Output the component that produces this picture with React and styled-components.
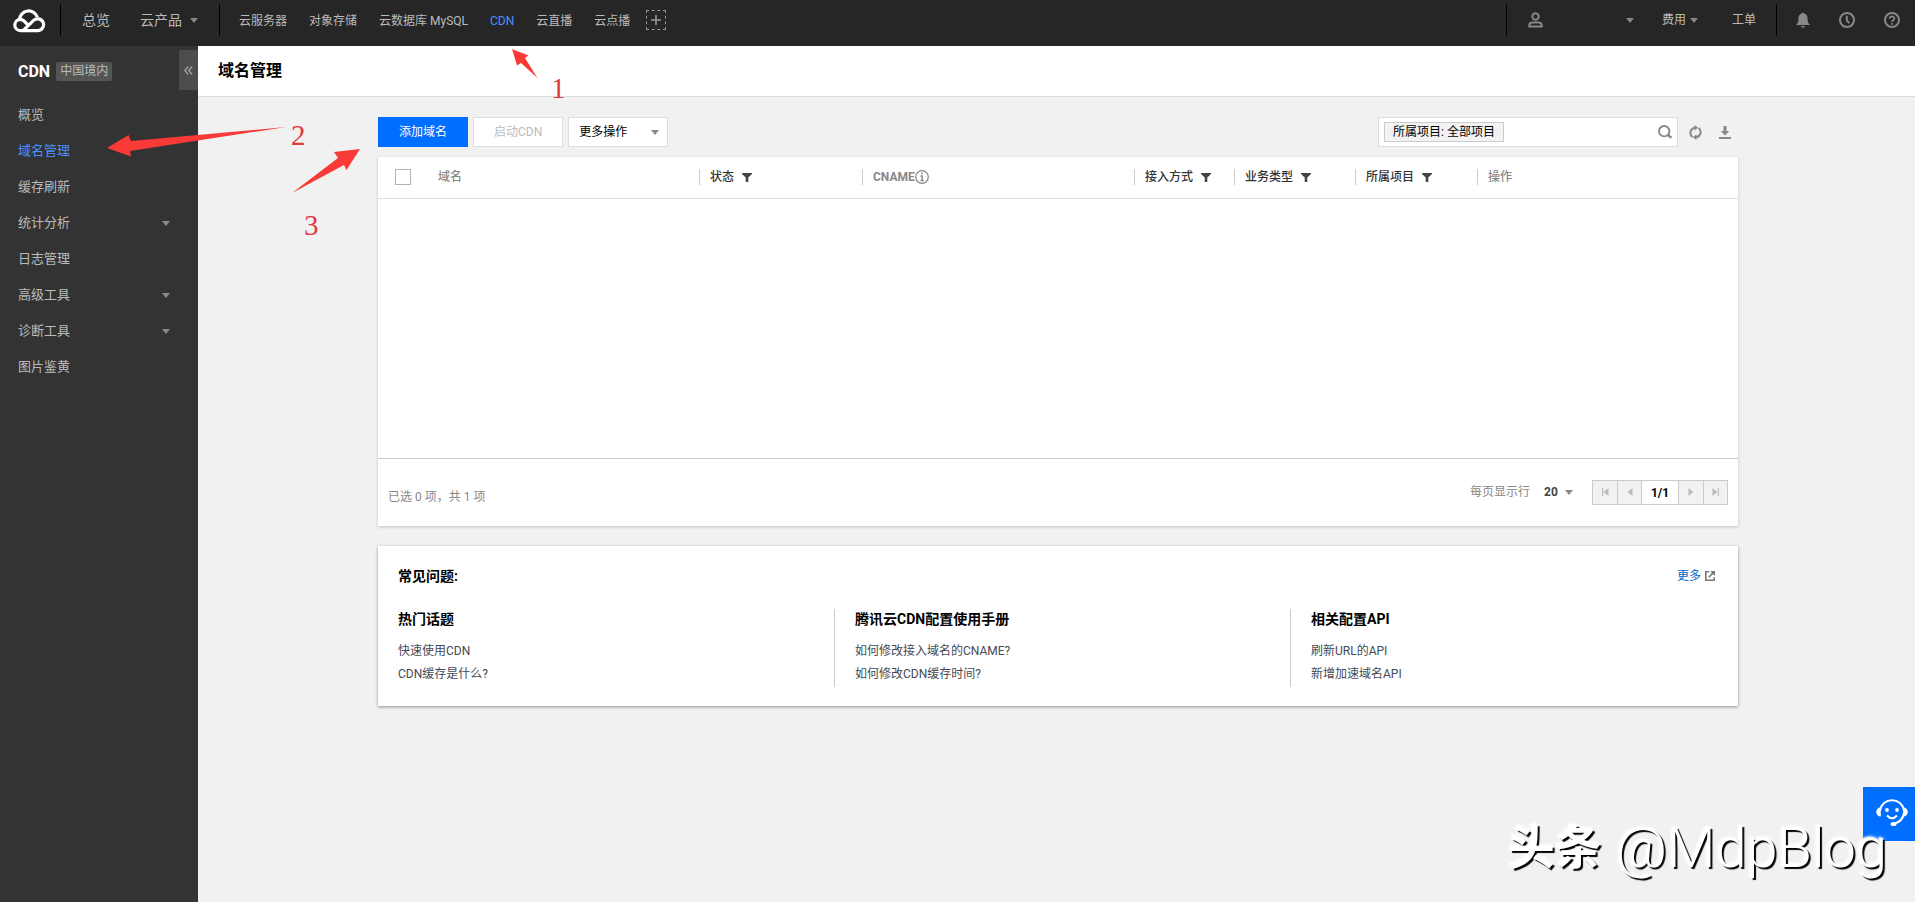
import React, { useState } from 'react';
import styled, { createGlobalStyle } from 'styled-components';

const GlobalStyle = createGlobalStyle`
  * {
    box-sizing: border-box;
  }

  body {
    margin: 0;
    background-color: #f1f1f1;
    color: #000000;
    font-family: Roboto, "Noto Sans CJK SC", sans-serif;
    font-size: 12px;
    line-height: 20px;
  }

  a {
    color: inherit;
    text-decoration: none;
  }

  button, input, select {
    font: inherit;
    color: inherit;
    border-radius: 0;
  }

  svg {
    display: block;
    flex: none;
  }
`;

const Page = styled.div`
  position: relative;
  display: flex;
  flex-direction: column;
  min-height: 100vh;
`;

const Header = styled.header`
  display: flex;
  align-items: center;
  justify-content: space-between;
  height: 46px;
  padding: 0 15px 6px 12px;
  background-color: #262626;
  color: #bbbbbb;
`;

const HeaderGroup = styled.nav`
  display: flex;
  align-items: center;
`;

const Divider = styled.span`
  width: 1px;
  height: 32px;
  background-color: #000000;
`;

const LogoLink = styled.a`
  margin-right: 14px;
`;

const MainLinks = styled.div`
  display: flex;
  align-items: center;
  gap: 30px;
  padding: 0 21px;
  font-size: 14px;
`;

const ProductLinks = styled.div`
  display: flex;
  align-items: center;
  gap: 22px;
  padding: 2px 0 0 19px;
`;

const NavLink = styled.a`
  display: flex;
  align-items: center;
  gap: ${(props) => props.$gap || 7}px;
  color: ${(props) => (props.$active ? '#4a90ff' : 'inherit')};
`;

const IconButton = styled.button`
  display: flex;
  align-items: center;
  justify-content: center;
  padding: 0;
  border: none;
  background: none;
  color: ${(props) => props.$color || '#888888'};
  cursor: pointer;
`;

const AddButton = styled(IconButton)`
  width: 20px;
  height: 20px;
  margin-left: 16px;
  border: 1px dashed #999999;
`;

const UserButton = styled(IconButton)`
  justify-content: space-between;
  width: 106px;
  margin: 0 28px 0 21px;
`;

const HeaderTexts = styled.div`
  display: flex;
  gap: 34px;
  padding-right: 20px;
`;

const HeaderIcons = styled.div`
  display: flex;
  align-items: center;
  gap: 29px;
  padding-left: 19px;
`;

const Body = styled.div`
  display: flex;
  flex: 1;
`;

const Sidebar = styled.aside`
  width: 198px;
  flex: none;
  background-color: #333333;
  color: #bbbbbb;
`;

const SidebarTop = styled.div`
  display: flex;
  justify-content: space-between;
  padding: 4px 0 4px 18px;
`;

const SidebarTitle = styled.div`
  display: flex;
  align-items: center;
  gap: 6px;
  height: 43px;
  color: #ffffff;
  font-size: 16px;
  font-weight: 700;
`;

const Region = styled.span`
  padding: 0 4px;
  border-radius: 2px;
  background-color: #555555;
  color: #bbbbbb;
  font-size: 12px;
  font-weight: 400;
  line-height: 19px;
`;

const Collapse = styled(IconButton)`
  width: 19px;
  height: 40px;
  background-color: #4d4d4d;
  color: #aaaaaa;
`;

const Menu = styled.ul`
  margin: 0;
  padding: 0;
  list-style: none;
`;

const MenuLink = styled.a`
  display: flex;
  align-items: center;
  justify-content: space-between;
  height: 36px;
  padding: 0 28px 0 18px;
  color: ${(props) => (props.$active ? '#4a90ff' : '#bbbbbb')};
  font-size: 13px;
`;

const Main = styled.main`
  flex: 1;
  min-width: 0;
`;

const TitleBar = styled.div`
  display: flex;
  align-items: center;
  height: 51px;
  padding: 0 20px;
  border-bottom: 1px solid #dddddd;
  background-color: #ffffff;
`;

const PageTitle = styled.h1`
  margin: 0;
  font-size: 16px;
  font-weight: 700;
`;

const Content = styled.div`
  padding: 20px 20px 20px 23px;
`;

const Inner = styled.div`
  max-width: 1360px;
  margin: 0 auto;
`;

const Toolbar = styled.div`
  display: flex;
  justify-content: space-between;
  margin-bottom: 10px;
`;

const ToolbarGroup = styled.div`
  display: flex;
  align-items: center;
  gap: ${(props) => props.$gap}px;
`;

const Button = styled.button`
  height: 30px;
  padding: 0 20px;
  border: 1px solid ${(props) => (props.$primary ? '#006eff' : '#dddddd')};
  background-color: ${(props) => (props.$primary ? '#006eff' : '#ffffff')};
  color: ${(props) => (props.$primary ? '#ffffff' : '#bbbbbb')};
  cursor: pointer;
`;

const SelectWrap = styled.span`
  display: inline-grid;
  align-items: center;

  select, svg {
    grid-area: 1 / 1;
  }

  svg {
    justify-self: end;
    margin-right: ${(props) => props.$caretRight || 0}px;
    pointer-events: none;
  }
`;

const ActionSelect = styled.select`
  width: 100px;
  height: 30px;
  padding: 0 10px;
  border: 1px solid #dddddd;
  appearance: none;
  background-color: #ffffff;
`;

const SearchBox = styled.div`
  display: flex;
  align-items: center;
  width: 300px;
  height: 30px;
  padding: 0 5px;
  border: 1px solid #dddddd;
  background-color: #ffffff;
`;

const Tag = styled.span`
  padding: 0 8px;
  border: 1px solid #cccccc;
  background-color: #f2f2f2;
  line-height: 18px;
  white-space: nowrap;
`;

const SearchInput = styled.input`
  flex: 1;
  min-width: 0;
  padding: 0 6px;
  border: none;
  outline: none;
  background: none;
`;

const ToolIcons = styled.div`
  display: flex;
  align-items: center;
  gap: 17px;
  padding: 0 7px 0 11px;
`;

const Card = styled.section`
  background-color: #ffffff;
  box-shadow: 0 1px 3px rgba(0, 0, 0, ${(props) => (props.$deep ? '0.4' : '0.2')});
`;

const Table = styled.table`
  width: 100%;
  border-collapse: collapse;
  table-layout: fixed;
`;

const Th = styled.th`
  height: 41px;
  padding: 0;
  border-bottom: 1px solid #dddddd;
  color: ${(props) => (props.$dark ? '#333333' : '#888888')};
  font-weight: ${(props) => props.$weight || 500};
  text-align: left;
`;

const ThInner = styled.div`
  display: flex;
  align-items: center;
  gap: ${(props) => props.$gap || 0}px;
  height: 16px;
  padding-left: 10px;
  border-left: 1px solid ${(props) => (props.$plain ? 'transparent' : '#cccccc')};
`;

const EmptyCell = styled.td`
  height: 260px;
  padding: 0;
  border-bottom: 1px solid #cccccc;
`;

const Checkbox = styled.input`
  display: block;
  width: 16px;
  height: 16px;
  margin: 0 0 0 17px;
  border: 1px solid #b2b2b2;
  appearance: none;
  background-color: #ffffff;

  &:checked {
    background-color: #006eff;
  }
`;

const TableFooter = styled.div`
  display: flex;
  align-items: center;
  justify-content: space-between;
  height: 67px;
  padding: 0 10px;
  color: #888888;
`;

const Summary = styled.p`
  margin: 0;
  padding-top: 10px;
`;

const Paging = styled.div`
  display: flex;
  align-items: center;
  gap: 19px;
`;

const PageSizeLabel = styled.label`
  display: flex;
  align-items: center;
  gap: 14px;
`;

const PageSizeSelect = styled.select`
  width: 29px;
  padding: 0;
  border: none;
  appearance: none;
  background: none;
  color: #444444;
  font-weight: 700;
`;

const Pager = styled.div`
  display: flex;
  height: 25px;
  border: 1px solid #cccccc;
`;

const PagerButton = styled.button`
  display: flex;
  align-items: center;
  justify-content: center;
  width: 24px;
  padding: 0;
  border: none;
  background-color: #f2f2f2;
  color: #bbbbbb;

  & + & {
    border-left: 1px solid #cccccc;
  }
`;

const PagerText = styled.span`
  width: 38px;
  border: 1px solid #cccccc;
  border-width: 0 1px;
  color: #000000;
  font-size: 12px;
  font-weight: 700;
  line-height: 24px;
  text-align: center;
`;

const Faq = styled(Card)`
  margin-top: 20px;
  padding: 20px 0 19px;
`;

const FaqHeader = styled.div`
  display: flex;
  align-items: center;
  justify-content: space-between;
  padding: 0 23px 0 20px;
  margin-bottom: 23px;
`;

const FaqTitle = styled.h2`
  margin: 0;
  font-size: 14px;
  font-weight: 700;
`;

const MoreLink = styled.a`
  display: flex;
  align-items: center;
  gap: 4px;
  color: #0066cc;
`;

const FaqColumns = styled.div`
  display: grid;
  grid-template-columns: 1fr 1fr 448px;
`;

const FaqColumn = styled.div`
  height: 78px;
  padding-left: 20px;

  & + & {
    border-left: 1px solid #cccccc;
  }
`;

const FaqHeading = styled.h3`
  margin: 0 0 11px;
  font-size: 14px;
  font-weight: 700;
`;

const FaqLink = styled.a`
  display: block;
  color: #444a55;
  line-height: 23px;
`;

const Support = styled.button`
  position: fixed;
  right: 0;
  bottom: 61px;
  display: flex;
  align-items: center;
  justify-content: center;
  width: 52px;
  height: 54px;
  padding: 0 0 2px 6px;
  border: none;
  background-color: #006eff;
  color: #ffffff;
`;

const Watermark = styled.div`
  position: fixed;
  right: 28px;
  bottom: 21px;
  display: flex;
  align-items: center;
  gap: 14px;
  color: #ffffff;
  font-size: 56px;
  line-height: 66px;
  font-weight: 300;
  text-shadow: 2px 2px 1px #000000, -1px -1px 2px #ffffff, 0 0 4px #ffffff;
  pointer-events: none;
`;

const WatermarkSite = styled.span`
  font-size: 47px;
  font-weight: 700;
`;

const Marks = styled.svg`
  position: absolute;
  top: 0;
  left: 0;
  pointer-events: none;
`;

const MarkText = styled.text`
  fill: #e0393e;
  font-family: "Liberation Serif", serif;
  font-size: 29px;
`;

const Caret = ({ color = '#888888' }) => (
  <svg width="8" height="5" viewBox="0 0 8 5">
    <path d="M0 0h8L4 5z" fill={color} />
  </svg>
);

const Logo = () => (
  <svg width="34" height="26" viewBox="0 0 34 26" fill="none" stroke="#ffffff" strokeWidth="3.2" strokeLinejoin="round">
    <path d="M7.5 12.5A9.2 9.2 0 0 1 25.4 10.2" />
    <path d="M15.5 17.5 11.6 13.6A6 6 0 0 0 8.4 12.4a5.6 5.6 0 0 0 0 11.2h17.4a5.9 5.9 0 1 0-4.2-10.2L11.3 23.4" />
  </svg>
);

const UserIcon = () => (
  <svg width="15" height="16" viewBox="0 0 15 16" fill="none" stroke="currentColor" strokeWidth="2">
    <circle cx="7.5" cy="4.5" r="3.2" />
    <path d="M1.3 14.6v-1.2q0-2.8 3-2.8h6.4q3 0 3 2.8v1.2z" />
  </svg>
);

const BellIcon = () => (
  <svg width="14" height="16" viewBox="0 0 14 16" fill="currentColor">
    <path d="M6 1.4a1 1 0 0 1 2 0c2.4.5 3.6 2.3 3.6 5 0 3.2.5 4.6 2.4 6.6H0c1.9-2 2.4-3.4 2.4-6.6 0-2.7 1.2-4.5 3.6-5zM5 14h4a2 1.7 0 0 1-4 0z" />
  </svg>
);

const ClockIcon = () => (
  <svg width="16" height="16" viewBox="0 0 16 16" fill="none" stroke="currentColor" strokeWidth="2">
    <circle cx="8" cy="8" r="7" />
    <path d="M7.8 3.8V8.3l2.4 2.8" />
  </svg>
);

const HelpIcon = () => (
  <svg width="16" height="16" viewBox="0 0 16 16" fill="none" stroke="currentColor" strokeWidth="2">
    <circle cx="8" cy="8" r="7" />
    <path d="M5.7 6.6a2.3 2 0 1 1 3.5 1.6Q8 8.800 8 10M8 11v1.8" strokeWidth="1.7" />
  </svg>
);

const PlusIcon = () => (
  <svg width="10" height="10" viewBox="0 0 10 10" stroke="#999999" strokeWidth="1.6">
    <path d="M5 0v10M0 5h10" />
  </svg>
);

const CollapseIcon = () => (
  <svg width="9" height="9" viewBox="0 0 9 9" fill="none" stroke="currentColor" strokeWidth="1.2">
    <path d="M4.2.5.8 4.5l3.4 4M8.2.5 4.8 4.5l3.4 4" />
  </svg>
);

const SearchIcon = () => (
  <svg width="14" height="14" viewBox="0 0 14 14" fill="none" stroke="currentColor" strokeWidth="1.9">
    <circle cx="6.2" cy="6.2" r="5.2" />
    <path d="M9.6 9.6l3.7 3.2" strokeWidth="2.4" />
  </svg>
);

const RefreshIcon = () => (
  <svg width="13" height="15" viewBox="0 0 13 15" fill="none" stroke="currentColor" strokeWidth="2">
    <path d="M3.4 12A5.2 5.2 0 0 1 6.300 2.700M9.600 3a5.200 5.200 0 0 1-2.900 9.300" />
    <path d="M5.600 0l3.600 2.700-3.600 2.900zM7.400 15l-3.600-2.700 3.600-2.900z" fill="currentColor" stroke="none" />
  </svg>
);

const DownloadIcon = () => (
  <svg width="12" height="13" viewBox="0 0 12 13" fill="currentColor">
    <path d="M4.5 0h3v5h2.700L6 9.500 1.800 5h2.700zM0 11h12v2H0z" />
  </svg>
);

const FilterIcon = () => (
  <svg width="10" height="9" viewBox="0 0 10 9" fill="#444444">
    <path d="M0 0h10v1L6.300 4.600V9H3.700V4.600L0 1z" />
  </svg>
);

const InfoIcon = () => (
  <svg width="14" height="14" viewBox="0 0 14 14" fill="none" stroke="#888888">
    <circle cx="7" cy="7" r="6.3" strokeWidth="1.2" />
    <path d="M5.500 6h1.700v4.500M5.500 10.500h3.400M6.200 3.500h1.600" strokeWidth="1.4" />
  </svg>
);

const PagerArrow = ({ bar, flip }) => (
  <svg width="8" height="8" viewBox="0 0 8 8" fill="currentColor">
    <g transform={flip ? 'matrix(-1 0 0 1 8 0)' : undefined}>
      <path d={bar ? 'M1 0h1.2v8H1zM7.5 0v8L2.5 4z' : 'M6.5 0v8L1.5 4z'} />
    </g>
  </svg>
);

const ExternalIcon = () => (
  <svg width="10" height="10" viewBox="0 0 10 10" fill="none" stroke="#777777" strokeWidth="1.6">
    <path d="M4.2.8H.8v8.4h8.4V6.200M3.800 6.200l4.800-4.800M5.800.8h3.400v3.400" />
  </svg>
);

const SupportIcon = () => (
  <svg width="32" height="28" viewBox="0 0 32 28" fill="none" stroke="currentColor" strokeWidth="2">
    <path d="M4 11.500C5 5 10 1.200 16 1.200S27 5 28 11.500" />
    <path d="M28 14c-1 6-4.500 9.500-10 10.800" />
    <path d="M4.800 8.500v9C2.200 17.500.2 15.500.2 13s2-4.500 4.600-4.500zM27.200 8.500v9c2.600 0 4.600-2 4.600-4.500s-2-4.500-4.600-4.500z" fill="currentColor" stroke="none" />
    <path d="M11 16.500q5 5.500 10 0" />
    <circle cx="11" cy="11" r="1.9" fill="currentColor" stroke="none" />
    <circle cx="21" cy="11" r="1.9" fill="currentColor" stroke="none" />
    <ellipse cx="17.5" cy="25" rx="3" ry="2" fill="currentColor" stroke="none" />
  </svg>
);

const products = ['云服务器', '对象存储', '云数据库 MySQL', 'CDN', '云直播', '云点播'];

const menu = [
  { label: '概览' },
  { label: '域名管理', active: true },
  { label: '缓存刷新' },
  { label: '统计分析', children: true },
  { label: '日志管理' },
  { label: '高级工具', children: true },
  { label: '诊断工具', children: true },
  { label: '图片鉴黄' },
];

const columnWidths = [49, 272, 163, 272, 100, 121, 122];

const faq = [
  { title: '热门话题', links: ['快速使用CDN', 'CDN缓存是什么?'] },
  { title: '腾讯云CDN配置使用手册', links: ['如何修改接入域名的CNAME?', '如何修改CDN缓存时间?'] },
  { title: '相关配置API', links: ['刷新URL的API', '新增加速域名API'] },
];

const FilterTh = ({ children }) => (
  <Th $dark>
    <ThInner $gap={8}>
      {children}
      <FilterIcon />
    </ThInner>
  </Th>
);

const TopBar = () => (
  <Header>
    <HeaderGroup>
      <LogoLink href="#" aria-label="腾讯云"><Logo /></LogoLink>
      <Divider />
      <MainLinks>
        <NavLink href="#">总览</NavLink>
        <NavLink href="#" $gap={8}>云产品 <Caret /></NavLink>
      </MainLinks>
      <Divider />
      <ProductLinks>
        {products.map((name) => (
          <NavLink href="#" key={name} $active={name === 'CDN'}>{name}</NavLink>
        ))}
      </ProductLinks>
      <AddButton aria-label="添加"><PlusIcon /></AddButton>
    </HeaderGroup>
    <HeaderGroup>
      <Divider />
      <UserButton aria-label="账号"><UserIcon /><Caret /></UserButton>
      <HeaderTexts>
        <NavLink href="#" $gap={4}>费用 <Caret /></NavLink>
        <NavLink href="#">工单</NavLink>
      </HeaderTexts>
      <Divider />
      <HeaderIcons>
        <IconButton aria-label="消息"><BellIcon /></IconButton>
        <IconButton aria-label="历史"><ClockIcon /></IconButton>
        <IconButton aria-label="帮助"><HelpIcon /></IconButton>
      </HeaderIcons>
    </HeaderGroup>
  </Header>
);

const SideMenu = () => (
  <Sidebar>
    <SidebarTop>
      <SidebarTitle>CDN <Region>中国境内</Region></SidebarTitle>
      <Collapse aria-label="收起"><CollapseIcon /></Collapse>
    </SidebarTop>
    <Menu>
      {menu.map((item) => (
        <li key={item.label}>
          <MenuLink href="#" $active={item.active}>
            {item.label}
            {item.children && <Caret />}
          </MenuLink>
        </li>
      ))}
    </Menu>
  </Sidebar>
);

const DomainTable = () => {
  const [checked, setChecked] = useState(false);

  return (
    <Card>
      <Table>
        <colgroup>
          {columnWidths.map((width, i) => <col key={i} width={width} />)}
          <col />
        </colgroup>
        <thead>
          <tr>
            <Th>
              <Checkbox type="checkbox" aria-label="全选" checked={checked} onChange={() => setChecked(!checked)} />
            </Th>
            <Th><ThInner $plain>域名</ThInner></Th>
            <FilterTh>状态</FilterTh>
            <Th $weight={700}><ThInner>CNAME<InfoIcon /></ThInner></Th>
            <FilterTh>接入方式</FilterTh>
            <FilterTh>业务类型</FilterTh>
            <FilterTh>所属项目</FilterTh>
            <Th><ThInner>操作</ThInner></Th>
          </tr>
        </thead>
        <tbody>
          <tr>
            <EmptyCell colSpan={8} />
          </tr>
        </tbody>
      </Table>
      <TableFooter>
        <Summary>已选 0 项，共 1 项</Summary>
        <Paging>
          <PageSizeLabel>
            每页显示行
            <SelectWrap>
              <PageSizeSelect defaultValue="20">
                <option>20</option>
                <option>50</option>
              </PageSizeSelect>
              <Caret />
            </SelectWrap>
          </PageSizeLabel>
          <Pager>
            <PagerButton aria-label="首页"><PagerArrow bar /></PagerButton>
            <PagerButton aria-label="上一页"><PagerArrow /></PagerButton>
            <PagerText>1/1</PagerText>
            <PagerButton aria-label="下一页"><PagerArrow flip /></PagerButton>
            <PagerButton aria-label="末页"><PagerArrow bar flip /></PagerButton>
          </Pager>
        </Paging>
      </TableFooter>
    </Card>
  );
};

const App = () => {
  const [keyword, setKeyword] = useState('');

  return (
    <Page>
      <GlobalStyle />
      <TopBar />
      <Body>
        <SideMenu />
        <Main>
          <TitleBar><PageTitle>域名管理</PageTitle></TitleBar>
          <Content>
            <Inner>
              <Toolbar>
                <ToolbarGroup $gap={5}>
                  <Button $primary>添加域名</Button>
                  <Button disabled>启动CDN</Button>
                  <SelectWrap $caretRight={9}>
                    <ActionSelect aria-label="更多操作">
                      <option>更多操作</option>
                    </ActionSelect>
                    <Caret />
                  </SelectWrap>
                </ToolbarGroup>
                <ToolbarGroup $gap={0}>
                  <SearchBox>
                    <Tag>所属项目: 全部项目</Tag>
                    <SearchInput
                      aria-label="搜索域名"
                      value={keyword}
                      onChange={(e) => setKeyword(e.target.value)}
                    />
                    <IconButton aria-label="搜索"><SearchIcon /></IconButton>
                  </SearchBox>
                  <ToolIcons>
                    <IconButton aria-label="刷新"><RefreshIcon /></IconButton>
                    <IconButton aria-label="下载"><DownloadIcon /></IconButton>
                  </ToolIcons>
                </ToolbarGroup>
              </Toolbar>
              <DomainTable />
              <Faq $deep>
                <FaqHeader>
                  <FaqTitle>常见问题:</FaqTitle>
                  <MoreLink href="#">更多<ExternalIcon /></MoreLink>
                </FaqHeader>
                <FaqColumns>
                  {faq.map((column) => (
                    <FaqColumn key={column.title}>
                      <FaqHeading>{column.title}</FaqHeading>
                      {column.links.map((link) => (
                        <FaqLink href="#" key={link}>{link}</FaqLink>
                      ))}
                    </FaqColumn>
                  ))}
                </FaqColumns>
              </Faq>
            </Inner>
          </Content>
        </Main>
      </Body>
      <Marks width="580" height="250" viewBox="0 0 580 250" fill="#f93a37">
        <path d="M512 49l16.500 6.500-3.500 2.500 12.500 20-16.500-15-4 2.500z" />
        <path d="M107 148l21.500-13 2.500 6 155-14-156 24 1 5.500z" />
        <path d="M360 149l-13.500 21-2.500-5-52 28 46-35-4-6z" />
        <MarkText x="551" y="98">1</MarkText>
        <MarkText x="291" y="145">2</MarkText>
        <MarkText x="304" y="235">3</MarkText>
      </Marks>
      <Support aria-label="在线客服"><SupportIcon /></Support>
      <Watermark><WatermarkSite>头条</WatermarkSite>@MdpBlog</Watermark>
    </Page>
  );
};

export default App;
